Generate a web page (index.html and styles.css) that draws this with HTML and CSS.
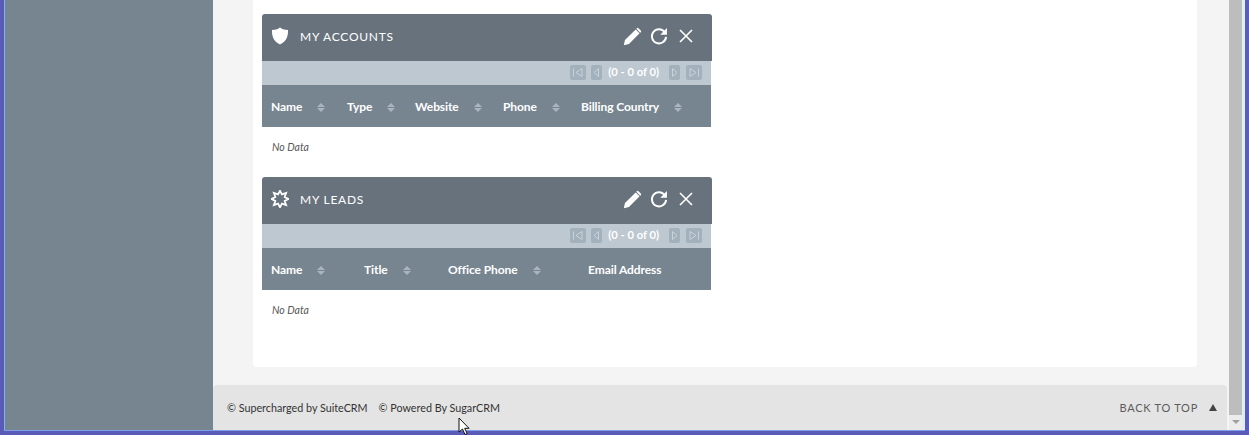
FILE: index.html
```html
<!DOCTYPE html>
<html lang="en">
<head>
    <meta charset="UTF-8">
    <title>SuiteCRM</title>
    <link rel="stylesheet" href="styles.css">
</head>
<body>
<svg class="defs" width="0" height="0">
    <symbol id="ic-edit" viewBox="0 0 24 24"><path d="M1 23l1.500-6.500L16 3l5 5L7.500 21.500z M17.500 1.500a1.500 1.500 0 0 1 2 0l3 3a1.500 1.500 0 0 1 0 2L21.800 7.200l-5-5z" fill="#fff"/></symbol>
    <symbol id="ic-refresh" viewBox="0 0 24 24"><path d="M19 7.500A8.500 8.500 0 1 0 20.500 13" fill="none" stroke="#fff" stroke-width="2.300"/><path d="M21.500 2.500v8h-8z" fill="#fff"/></symbol>
    <symbol id="ic-close" viewBox="0 0 24 24"><path d="M4 4l16 16M20 4L4 20" fill="none" stroke="#fff" stroke-width="2.200"/></symbol>
    <symbol id="pg-first" viewBox="0 0 16 15"><path d="M3.500 3.500v8M12 3.500v8L6 7.500z" fill="none" stroke="#c9d3da"/></symbol>
    <symbol id="pg-prev" viewBox="0 0 11 15"><path d="M7.500 3.500v8L3 7.500z" fill="none" stroke="#c9d3da"/></symbol>
    <symbol id="pg-next" viewBox="0 0 11 15"><path d="M3.500 3.500v8L8 7.500z" fill="none" stroke="#c9d3da"/></symbol>
    <symbol id="pg-last" viewBox="0 0 16 15"><path d="M12.500 3.500v8M4 3.500v8L10 7.500z" fill="none" stroke="#c9d3da"/></symbol>
</svg>
<div class="window">
    <div class="sidebar"></div>
    <div class="main">
        <div class="content">
            <div class="card">
                <div class="dashlet">
                    <div class="dash-head">
                        <svg class="dash-icon" viewBox="0 0 18 18"><path d="M9 .5C11.500 2.300 14 3 17 3C17.300 9.500 15 14.800 9 17.500C3 14.800 .7 9.500 1 3C4 3 6.500 2.300 9 .5Z" fill="#fff"/></svg>
                        <span class="dash-title">MY ACCOUNTS</span>
                        <svg class="tool tool-edit"><use href="#ic-edit"/></svg>
                        <svg class="tool tool-refresh"><use href="#ic-refresh"/></svg>
                        <svg class="tool tool-close"><use href="#ic-close"/></svg>
                    </div>
                    <div class="pager">
                        <svg class="pg-btn pg-wide"><use href="#pg-first"/></svg>
                        <svg class="pg-btn"><use href="#pg-prev"/></svg>
                        <span class="pg-text">(0 - 0 of 0)</span>
                        <svg class="pg-btn"><use href="#pg-next"/></svg>
                        <svg class="pg-btn pg-wide pg-end"><use href="#pg-last"/></svg>
                    </div>
                    <table class="list">
                        <colgroup>
                            <col class="w76"><col class="w68"><col class="w88"><col class="w78"><col>
                        </colgroup>
                        <thead>
                        <tr>
                            <th>Name<i class="sort"></i></th>
                            <th>Type<i class="sort"></i></th>
                            <th>Website<i class="sort"></i></th>
                            <th>Phone<i class="sort"></i></th>
                            <th>Billing Country<i class="sort"></i></th>
                        </tr>
                        </thead>
                        <tbody>
                        <tr><td colspan="5">No Data</td></tr>
                        </tbody>
                    </table>
                </div>
                <div class="dashlet">
                    <div class="dash-head">
                        <svg class="dash-icon" viewBox="0 0 18 18"><path d="M9 .6L10.910 4.380 15.150 2.850 13.620 7.090 17.400 9 13.620 10.910 15.150 15.150 10.910 13.620 9 17.400 7.090 13.620 2.850 15.150 4.380 10.910 .6 9 4.380 7.090 2.850 2.850 7.090 4.380Z" fill="none" stroke="#fff" stroke-width="1.700"/></svg>
                        <span class="dash-title">MY LEADS</span>
                        <svg class="tool tool-edit"><use href="#ic-edit"/></svg>
                        <svg class="tool tool-refresh"><use href="#ic-refresh"/></svg>
                        <svg class="tool tool-close"><use href="#ic-close"/></svg>
                    </div>
                    <div class="pager">
                        <svg class="pg-btn pg-wide"><use href="#pg-first"/></svg>
                        <svg class="pg-btn"><use href="#pg-prev"/></svg>
                        <span class="pg-text">(0 - 0 of 0)</span>
                        <svg class="pg-btn"><use href="#pg-next"/></svg>
                        <svg class="pg-btn pg-wide pg-end"><use href="#pg-last"/></svg>
                    </div>
                    <table class="list">
                        <colgroup>
                            <col class="w93"><col class="w84"><col class="w140"><col>
                        </colgroup>
                        <thead>
                        <tr>
                            <th>Name<i class="sort"></i></th>
                            <th>Title<i class="sort"></i></th>
                            <th>Office Phone<i class="sort"></i></th>
                            <th>Email Address</th>
                        </tr>
                        </thead>
                        <tbody>
                        <tr><td colspan="4">No Data</td></tr>
                        </tbody>
                    </table>
                </div>
            </div>
        </div>
        <div class="footer">
            <div class="credits">
                <span>© Supercharged by SuiteCRM</span>
                <span>© Powered By SugarCRM</span>
            </div>
            <div class="back-top">BACK TO TOP<span class="back-arrow"></span></div>
        </div>
    </div>
    <div class="scrollbar"><span class="scroll-down"></span></div>
</div>
<svg class="cursor" viewBox="0 0 14 18"><path d="M1 1v14l3.500-3 2.500 5.500 2.200-1-2.500-5.200H11z" fill="#fff" stroke="#111" stroke-width="1"/></svg>
</body>
</html>
```

FILE: styles.css
```css
html,body{margin:0;padding:0;height:435px;overflow:hidden;}
body{background:#5a5ab8;font-family:"Lato","Liberation Sans",sans-serif;color:#333;position:relative;}
.defs{position:absolute;}
.window{display:flex;height:430px;margin:0 4px;background:#f4f4f4;border-left:1px solid #7fb4f0;border-right:3px solid #dcecf8;box-shadow:0 1px 0 #7fa0e8;}
.sidebar{width:208px;background:#778591;flex:none;}
.main{flex:1;display:flex;flex-direction:column;min-width:0;}
.content{flex:1;padding:0 32px 18px 40px;}
.card{background:#fff;height:367px;box-sizing:border-box;padding:14px 0 0 9px;border-radius:0 0 4px 4px;}
.dashlet{width:450px;margin-bottom:10px;}
.dash-head{height:47px;box-sizing:border-box;padding:0 17px 3px 9px;background:#67727d;border-radius:3px 3px 0 0;display:flex;align-items:center;color:#fff;}
.dash-icon{width:18px;height:18px;flex:none;}
.dash-title{font-size:12px;letter-spacing:.75px;margin-left:11px;flex:1;}
.tool{flex:none;}
.tool-edit{width:19px;height:19px;}
.tool-refresh{width:20px;height:20px;margin-left:7px;}
.tool-close{width:18px;height:18px;margin-left:8px;}
.pager{height:24px;width:449px;background:#bdc8d0;display:flex;align-items:center;justify-content:flex-end;box-sizing:border-box;padding:0 9px 1px 0;}
.pg-btn{width:11px;height:15px;background:#a3b1bd;border-radius:2px;margin-left:5px;flex:none;}
.pg-wide{width:16px;}
.pg-end{margin-left:6px;}
.pg-text{color:#fff;font-size:11.200px;font-weight:bold;margin:0 5px 2px 6px;white-space:nowrap;}
.list{width:449px;border-collapse:collapse;table-layout:fixed;}
.list th{height:42px;background:#778591;color:#fff;font-size:12px;letter-spacing:-.08px;font-weight:bold;text-align:left;padding:0 0 0 9px;white-space:nowrap;}
.list td{height:40px;box-sizing:border-box;font-size:10.500px;font-style:italic;padding:0 0 1px 10px;color:#555;}
.w76{width:76px;}
.w68{width:68px;}
.w88{width:88px;}
.w78{width:78px;}
.w93{width:93px;}
.w84{width:84px;}
.w140{width:140px;}
.sort{display:inline-block;width:8px;height:9px;margin-left:15px;vertical-align:-1px;position:relative;}
.sort:before,.sort:after{content:"";position:absolute;left:0;border-left:4px solid transparent;border-right:4px solid transparent;}
.sort:before{top:0;border-bottom:4px solid #a9b5bf;}
.sort:after{bottom:0;border-top:4px solid #a9b5bf;}
.footer{height:45px;width:1014px;background:#e4e4e4;border-radius:4px 4px 0 0;display:flex;align-items:center;justify-content:space-between;box-sizing:border-box;padding:0 10px 0 14px;flex:none;}
.credits{font-size:10.750px;display:flex;gap:11px;color:#333;}
.back-top{font-size:11px;letter-spacing:.75px;color:#5c5c5c;display:flex;align-items:center;}
.back-arrow{width:0;height:0;border-left:4px solid transparent;border-right:4px solid transparent;border-bottom:7px solid #444;margin-left:11px;}
.scrollbar{width:13px;flex:none;background:#bdbdbd;position:relative;}
.scroll-down{position:absolute;left:0;right:0;bottom:0;height:15px;background:#ececec;}
.scroll-down:after{content:"";position:absolute;left:3px;top:5px;border-left:4px solid transparent;border-right:4px solid transparent;border-top:4px solid #a0a0a0;}
.cursor{position:absolute;left:458px;top:417px;width:14px;height:18px;}
```
